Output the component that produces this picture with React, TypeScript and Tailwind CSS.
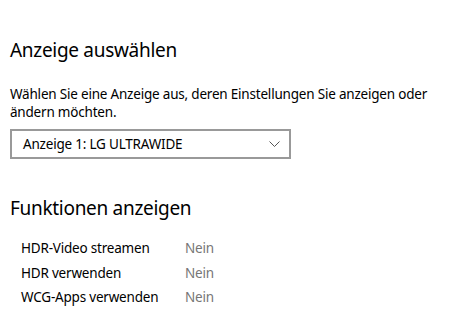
import React from 'react';

const FEATURES = [
  { label: 'HDR-Video streamen', value: 'Nein' },
  { label: 'HDR verwenden', value: 'Nein' },
  { label: 'WCG-Apps verwenden', value: 'Nein' },
];

const App = () => {
  return (
    <div
      className="w-[474px] h-[332px] bg-white text-black pl-[10px] pt-[36px]"
      style={{ fontFamily: '"Noto Sans", "Open Sans", sans-serif' }}
    >
      <h2 className="text-[19px] leading-[28px] tracking-[-0.3px]">Anzeige auswählen</h2>

      <p className="mt-[21px] text-[13.5px] leading-[18px] tracking-[-0.2px]">
        Wählen Sie eine Anzeige aus, deren Einstellungen Sie anzeigen oder
        <br />
        ändern möchten.
      </p>

      <div className="mt-[8px] w-[281px] h-[30px] border-2 border-[#999999] flex items-center justify-between pl-[11px] pr-[9px] text-[13.5px] tracking-[-0.2px]">
        <span>Anzeige 1: LG ULTRAWIDE</span>
        <svg width="11" height="6" viewBox="0 0 11 6" fill="none">
          <path d="M0.5 0.5L5.5 5.5L10.5 0.5" stroke="#555" strokeWidth="1" />
        </svg>
      </div>

      <h2 className="mt-[35px] text-[19px] leading-[28px] tracking-[-0.3px]">Funktionen anzeigen</h2>

      <div className="mt-[14px] pl-[11px] grid grid-cols-[164px_auto] text-[13.5px] leading-[24.5px] tracking-[-0.2px]">
        {FEATURES.map((f) => (
          <React.Fragment key={f.label}>
            <span>{f.label}</span>
            <span className="text-[#767676]">{f.value}</span>
          </React.Fragment>
        ))}
      </div>
    </div>
  );
};

export default App;
